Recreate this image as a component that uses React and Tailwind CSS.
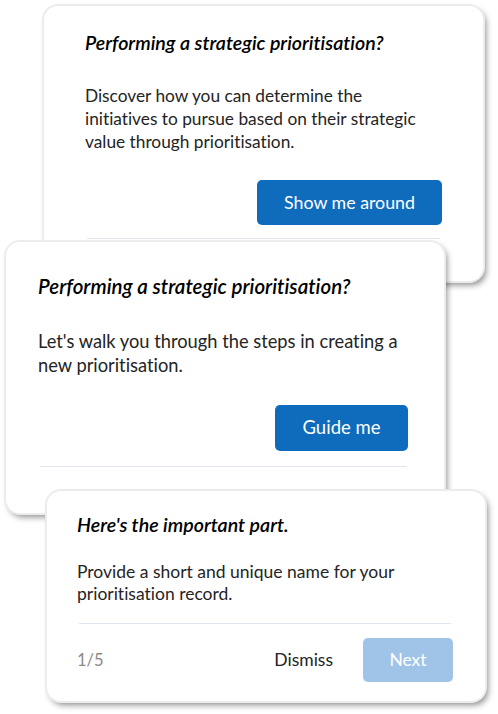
import React from 'react';

const fontStack = { fontFamily: 'Lato, "Noto Sans", sans-serif' };

function Card({ className, children }) {
  return (
    <div
      className={
        'relative bg-white rounded-[14px] shadow-[0_0_0_2px_#ececec,3px_4px_6px_rgba(0,0,0,0.45)] ' +
        className
      }
    >
      {children}
    </div>
  );
}

export default function App() {
  return (
    <div
      className="w-[498px] h-[714px] bg-white overflow-hidden pt-[6px] [font-variant-ligatures:none]"
      style={fontStack}
    >
      {/* carte 1 */}
      <Card className="ml-[44px] w-[439px] h-[275px] px-[41px] pt-[23px]">
        <h2 className="text-[19.6px] leading-[28px] font-semibold italic text-black">
          Performing a strategic prioritisation?
        </h2>
        <p className="mt-[27px] text-[17.3px] leading-[23px] text-[#242424]">
          Discover how you can determine the
          <br />
          initiatives to pursue based on their strategic
          <br />
          value through prioritisation.
        </p>
        <div className="mt-[27px] flex justify-end">
          <button className="w-[185px] h-[45px] rounded-[5px] bg-[#0f6cbd] text-white text-[17.8px]">
            Show me around
          </button>
        </div>
        <div className="mt-[13px] mx-[2px] h-px bg-[#e1e6ee]" />
      </Card>

      {/* carte 2 */}
      <Card className="-mt-[39px] ml-[6px] w-[438px] h-[271px] pl-[32px] pr-[36px] pt-[30px]">
        <h2 className="text-[20.5px] leading-[28px] font-semibold italic text-black">
          Performing a strategic prioritisation?
        </h2>
        <p className="mt-[29px] text-[18.3px] leading-[24px] text-[#242424]">
          Let's walk you through the steps in creating a new prioritisation.
        </p>
        <div className="mt-[28px] flex justify-end">
          <button className="w-[133px] h-[46px] rounded-[5px] bg-[#0f6cbd] text-white text-[18.5px]">
            Guide me
          </button>
        </div>
        <div className="mt-[15px] ml-[2px] mr-[1px] h-px bg-[#e1e6ee]" />
      </Card>

      {/* carte 3 */}
      <Card className="-mt-[22px] ml-[47px] w-[438px] h-[210px] pl-[30px] pr-[32px] pt-[21px]">
        <h2 className="text-[19.6px] leading-[26px] font-semibold italic text-black">
          Here's the important part.
        </h2>
        <p className="mt-[23px] text-[17.5px] leading-[22px] text-[#242424]">
          Provide a short and unique name for your prioritisation record.
        </p>
        <div className="mt-[18px] ml-[2px] mr-[2px] h-px bg-[#e1e6ee]" />
        <div className="mt-[14px] flex items-center">
          <span className="text-[16.5px] text-[#8a8a8a]">1/5</span>
          <span className="ml-auto mr-[30px] text-[17.5px] text-[#242424]">Dismiss</span>
          <button className="w-[90px] h-[44px] rounded-[5px] bg-[#a0c4e8] text-white text-[17.5px]">
            Next
          </button>
        </div>
      </Card>
    </div>
  );
}
